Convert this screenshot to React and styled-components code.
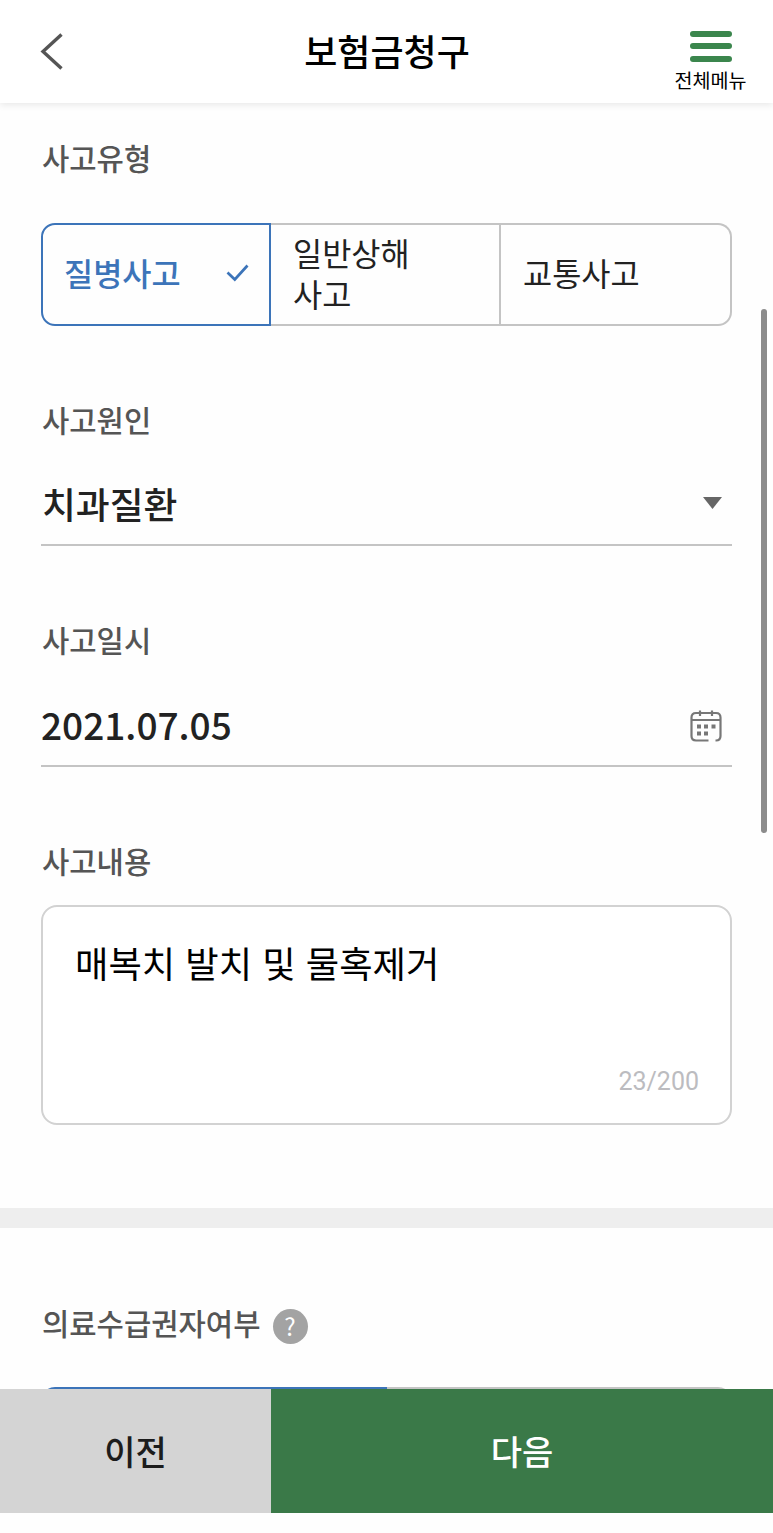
import React from "react";
import styled, { createGlobalStyle, css } from "styled-components";

const GlobalStyle = createGlobalStyle`
  * { box-sizing: border-box; }
  body { margin: 0; background: #fefefe; }
  button { font: inherit; border: 0; background: none; padding: 0; margin: 0; color: inherit; }
`;

const Screen = styled.div`
  position: relative;
  display: flex;
  flex-direction: column;
  height: 1533px;
  overflow: hidden;
  background: #fefefe;
  color: #222;
  font-family: "Noto Sans CJK KR", "Noto Sans", sans-serif;
`;

const Header = styled.header`
  flex: none;
  display: grid;
  grid-template-columns: 120px 1fr 120px;
  height: 103px;
  background: #fff;
  box-shadow: 0 2px 7px rgba(0, 0, 0, 0.09);
  z-index: 1;
`;

const BackButton = styled.button`
  display: flex;
  align-items: flex-start;
  padding: 32px 0 0 39px;
`;

const Title = styled.h1`
  margin: 0;
  padding-left: 1px;
  text-align: center;
  font-size: 36px;
  line-height: 100px;
  font-weight: 500;
  color: #000;
`;

const MenuButton = styled.button`
  display: flex;
  flex-direction: column;
  align-items: center;
  padding: 31px 5px 0 0;
  font-size: 19.6px;
  line-height: 24px;
  color: #000;
`;

const MenuBars = styled.span`
  display: grid;
  gap: 6.4px;
  margin: 0 0 6px;
`;

const MenuBar = styled.span`
  width: 42px;
  height: 6px;
  border-radius: 3px;
  background: #3b864d;
`;

const Content = styled.main`
  flex: none;
  height: 1286px;
  overflow: hidden;
`;

const Section = styled.section`
  display: flex;
  flex-direction: column;
  padding: ${(p) => p.$top}px 41px 0;
`;

const Field = styled.div`
  display: flex;
  flex-direction: column;
  gap: ${(p) => p.$gap}px;
  margin-bottom: ${(p) => p.$bottom || 0}px;
`;

const Label = styled.div`
  display: flex;
  align-items: center;
  gap: 12px;
  height: 44px;
  padding-left: 1px;
  font-size: 29.7px;
  line-height: 44px;
  font-weight: 500;
  color: #555;
  white-space: nowrap;
`;

const HelpBadge = styled.span`
  width: 35px;
  height: 35px;
  margin-top: 6px;
  border-radius: 50%;
  background: #a3a3a3;
  color: #fff;
  text-align: center;
  font-size: 24px;
  font-weight: 400;
  line-height: 34px;
`;

const Segments = styled.div`
  display: flex;
  height: 103px;
`;

const Segment = styled.button`
  flex: 1 0 0;
  min-width: 0;
  display: flex;
  align-items: center;
  justify-content: space-between;
  padding: 0 20px 0 22px;
  border: 2px solid #c4c4c4;
  border-left-width: 0;
  text-align: left;
  word-break: keep-all;
  font-size: 31.7px;
  line-height: 41px;
  color: #222;
  &:last-child { border-radius: 0 14px 14px 0; }
  ${(p) =>
    p.$active &&
    css`
      padding-left: 21px;
      border: 2px solid #3c74b9;
      border-radius: 14px 0 0 14px;
      color: #3c74b9;
      font-weight: 500;
    `}
`;

const TypeSegments = styled(Segments)`
  display: grid;
  grid-template-columns: 230px 230px 231px;
`;

const SegmentText = styled.span`
  max-width: 130px;
  margin-top: -4px;
`;

const Row = styled.div`
  display: flex;
  align-items: center;
  justify-content: space-between;
  height: 85px;
  padding: ${(p) => p.$shift || 0}px 10px 0 ${(p) => p.$indent || 0}px;
  border-bottom: 2px solid #c4c4c4;
  font-size: ${(p) => p.$size}px;
  line-height: 54px;
  font-weight: 500;
`;

const Memo = styled.div`
  display: flex;
  flex-direction: column;
  justify-content: space-between;
  height: 220px;
  padding: 28px 31px 22px 32px;
  border: 2px solid #d2d2d2;
  border-radius: 16px;
  background: #fff;
`;

const MemoText = styled.div`
  font-size: 36.3px;
  line-height: 54px;
  word-spacing: 2px;
  color: #000;
`;

const Counter = styled.div`
  text-align: right;
  font-family: Roboto, sans-serif;
  font-size: 25px;
  line-height: 38px;
  color: #bcbcc0;
`;

const Divider = styled.div`
  height: 20px;
  margin-top: 83px;
  background: #eee;
`;

const Footer = styled.footer`
  flex: none;
  display: flex;
  height: 124px;
`;

const FooterButton = styled.button`
  width: ${(p) => (p.$primary ? "auto" : "271px")};
  flex: ${(p) => (p.$primary ? 1 : "none")};
  padding-bottom: 1px;
  background: ${(p) => (p.$primary ? "#3a7948" : "#d4d4d4")};
  color: ${(p) => (p.$primary ? "#fff" : "#1c1c1c")};
  font-size: 34px;
  font-weight: 500;
`;

const ScrollThumb = styled.div`
  position: absolute;
  top: 309px;
  right: 6px;
  width: 6px;
  height: 524px;
  border-radius: 3px;
  background: #8c8c8c;
`;

const BackIcon = () => (
  <svg width="26" height="40" viewBox="0 0 26 40" fill="none" stroke="#555" strokeWidth="3.4">
    <path d="M22.5 2.5 4 19.5 22.5 36.5" />
  </svg>
);

const CheckSvg = styled.svg`
  flex: none;
  margin-top: -4px;
`;

const CheckIcon = () => (
  <CheckSvg width="23" height="18" viewBox="0 0 23 18" fill="none" stroke="#3c74b9" strokeWidth="2.7">
    <path d="M1.5 8.5 8.8 15.5 21.5 1.5" />
  </CheckSvg>
);

const ArrowIcon = () => (
  <svg width="19" height="12" viewBox="0 0 19 12" fill="#666">
    <path d="M0 0H19L9.5 12Z" />
  </svg>
);

const CalendarSvg = styled.svg`
  margin-top: 3px;
`;

const CalendarIcon = () => (
  <CalendarSvg width="32" height="32" viewBox="0 0 32 32" fill="none" stroke="#777" strokeWidth="2.2">
    <path d="M18.5 30.5H6Q1.5 30.5 1.5 26V7.500Q1.500 3 6 3H26Q30.500 3 30.500 7.500V26Q30.500 30.500 26 30.500H25.500M1.500 10H30.500M10 .5V6M22 .5V6" />
    <path
      fill="#777"
      stroke="none"
      d="M7 14.500h4v4H7zM14 14.500h4v4h-4zM21.500 14.500h4v4h-4zM7 21.500h4v4H7zM14 21.500h4v4h-4z"
    />
  </CalendarSvg>
);

export default function App() {
  return (
    <Screen>
      <GlobalStyle />
      <Header>
        <BackButton aria-label="뒤로">
          <BackIcon />
        </BackButton>
        <Title>보험금청구</Title>
        <MenuButton>
          <MenuBars>
            <MenuBar />
            <MenuBar />
            <MenuBar />
          </MenuBars>
          전체메뉴
        </MenuButton>
      </Header>

      <Content>
        <Section $top={33}>
          <Field $gap={43} $bottom={72}>
            <Label>사고유형</Label>
            <TypeSegments>
              <Segment $active>
                <SegmentText>질병사고</SegmentText>
                <CheckIcon />
              </Segment>
              <Segment>
                <SegmentText>일반상해 사고</SegmentText>
              </Segment>
              <Segment>
                <SegmentText>교통사고</SegmentText>
              </Segment>
            </TypeSegments>
          </Field>
          <Field $gap={19} $bottom={72}>
            <Label>사고원인</Label>
            <Row $size={36.8} $indent={1} $shift={1}>
              치과질환
              <ArrowIcon />
            </Row>
          </Field>
          <Field $gap={20} $bottom={72}>
            <Label>사고일시</Label>
            <Row $size={37} $shift={1}>
              2021.07.05
              <CalendarIcon />
            </Row>
          </Field>
          <Field $gap={22}>
            <Label>사고내용</Label>
            <Memo>
              <MemoText>매복치 발치 및 물혹제거</MemoText>
              <Counter>23/200</Counter>
            </Memo>
          </Field>
        </Section>
        <Divider />
        <Section $top={73}>
          <Field $gap={42}>
            <Label>
              의료수급권자여부
              <HelpBadge>?</HelpBadge>
            </Label>
            <Segments>
              <Segment $active />
              <Segment />
            </Segments>
          </Field>
        </Section>
      </Content>

      <Footer>
        <FooterButton>이전</FooterButton>
        <FooterButton $primary>다음</FooterButton>
      </Footer>
      <ScrollThumb />
    </Screen>
  );
}
